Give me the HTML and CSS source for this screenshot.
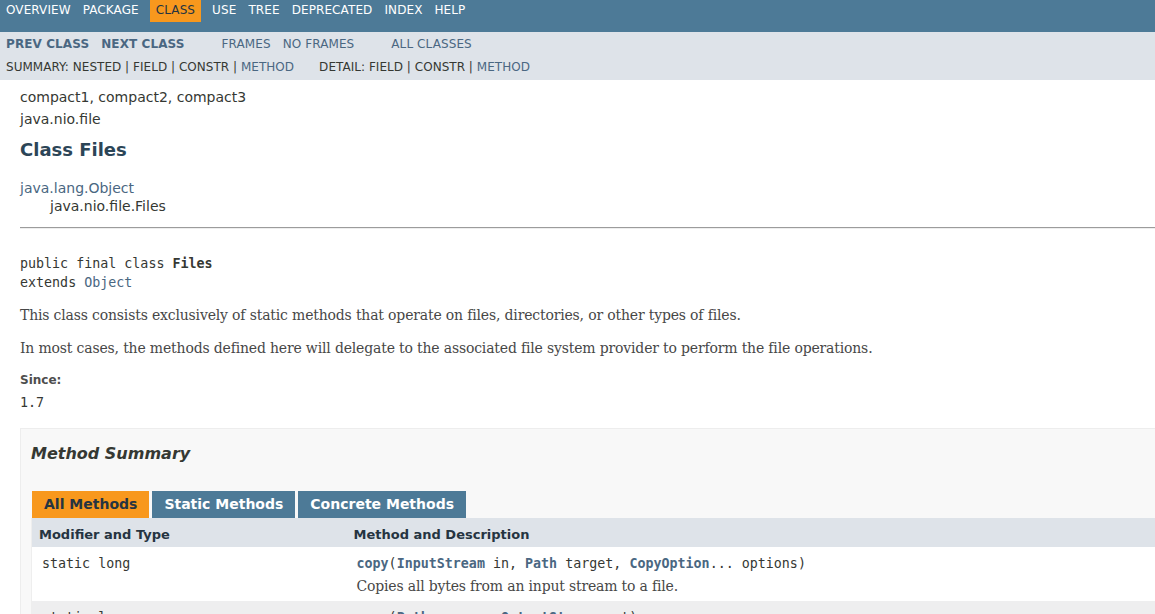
FILE: index.html
```html
<!DOCTYPE html>
<html lang="en">
<head>
<meta charset="utf-8">
<title>Files (Java Platform SE 8)</title>
<link rel="stylesheet" href="styles.css">
</head>
<body>
<div class="page">
  <div class="topNav">
    <ul class="navList">
      <li><a class="navLink" href="#">Overview</a></li>
      <li><a class="navLink" href="#">Package</a></li>
      <li class="navBarCell1Rev">Class</li>
      <li><a class="navLink" href="#">Use</a></li>
      <li><a class="navLink" href="#">Tree</a></li>
      <li><a class="navLink" href="#">Deprecated</a></li>
      <li><a class="navLink" href="#">Index</a></li>
      <li><a class="navLink" href="#">Help</a></li>
    </ul>
  </div>
  <div class="subNav">
    <div class="subRow">
      <ul class="navList">
        <li><a class="subLink strong" href="#">Prev Class</a></li>
        <li><a class="subLink strong" href="#">Next Class</a></li>
      </ul>
      <ul class="navList">
        <li><a class="subLink" href="#">Frames</a></li>
        <li><a class="subLink" href="#">No Frames</a></li>
      </ul>
      <ul class="navList">
        <li><a class="subLink" href="#">All Classes</a></li>
      </ul>
    </div>
    <div class="subRow subRow2">
      <ul class="subNavList">
        <li>Summary:&nbsp;</li>
        <li>Nested&nbsp;|&nbsp;</li>
        <li>Field&nbsp;|&nbsp;</li>
        <li>Constr&nbsp;|&nbsp;</li>
        <li><a class="subLink" href="#">Method</a></li>
      </ul>
      <ul class="subNavList">
        <li>Detail:&nbsp;</li>
        <li>Field&nbsp;|&nbsp;</li>
        <li>Constr&nbsp;|&nbsp;</li>
        <li><a class="subLink" href="#">Method</a></li>
      </ul>
    </div>
  </div>

  <div class="header">
    <div class="subTitle">compact1, compact2, compact3</div>
    <div class="subTitle">java.nio.file</div>
    <h2 class="title">Class Files</h2>
  </div>

  <div class="contentContainer">
    <ul class="inheritance">
      <li><a class="link" href="#">java.lang.Object</a></li>
      <li class="inheritChild">java.nio.file.Files</li>
    </ul>

    <div class="description">
      <hr class="rule">
      <pre class="decl">public final class <span class="typeNameLabel">Files</span>
extends <a class="link" href="#">Object</a></pre>
      <div class="block">This class consists exclusively of static methods that operate on files, directories, or other types of files.
        <p class="para">In most cases, the methods defined here will delegate to the associated file system provider to perform the file operations.</p>
      </div>
      <dl class="since">
        <dt class="sinceLabel">Since:</dt>
        <dd class="sinceValue">1.7</dd>
      </dl>
    </div>

    <div class="summary">
      <h3 class="summaryTitle">Method Summary</h3>
      <table class="memberSummary">
        <caption class="tabCaption">
          <div class="tabs"><span class="tab activeTab">All Methods</span><span class="tab">Static Methods</span><span class="tab">Concrete Methods</span></div>
        </caption>
        <colgroup>
          <col class="firstCol">
          <col>
        </colgroup>
        <tr class="headRow">
          <th class="colFirst">Modifier and Type</th>
          <th class="colLast">Method and Description</th>
        </tr>
        <tr class="rowColor">
          <td class="colFirst"><code class="code">static long</code></td>
          <td class="colLast"><code class="code"><a class="memberLink" href="#">copy</a>(<a class="memberLink" href="#">InputStream</a>&nbsp;in, <a class="memberLink" href="#">Path</a>&nbsp;target, <a class="memberLink" href="#">CopyOption</a>...&nbsp;options)</code>
            <div class="cellBlock">Copies all bytes from an input stream to a file.</div>
          </td>
        </tr>
        <tr class="altColor">
          <td class="colFirst"><code class="code">static long</code></td>
          <td class="colLast"><code class="code"><a class="memberLink" href="#">copy</a>(<a class="memberLink" href="#">Path</a>&nbsp;source, <a class="memberLink" href="#">OutputStream</a>&nbsp;out)</code>
            <div class="cellBlock">Copies all bytes from a file to an output stream.</div>
          </td>
        </tr>
      </table>
    </div>
  </div>
</div>
</body>
</html>
```

FILE: styles.css
```css
html {
  overflow: hidden;
}

body {
  margin: 0;
  background: #ffffff;
  color: #353833;
  font-family: "DejaVu Sans", Arial, Helvetica, sans-serif;
  font-size: 14px;
}

.page {
  min-width: 1400px;
}

a {
  text-decoration: none;
}

.link {
  color: #4a6782;
}

/* ---------- top navigation ---------- */
.topNav {
  background: #4d7a97;
  height: 32px;
  font-size: 12px;
  color: #ffffff;
  letter-spacing: 0.1px;
}

.navList,
.subNavList {
  list-style: none;
  margin: 0 25px 0 0;
  padding: 0;
  display: flex;
}

.topNav .navList li {
  padding: 3px 6px 5px;
  line-height: 14px;
  text-transform: uppercase;
}

.navLink {
  color: #ffffff;
}

.topNav .navList .navBarCell1Rev {
  background: #f8981d;
  color: #253441;
  margin: 0 5px;
}

/* ---------- sub navigation ---------- */
.subNav {
  background: #dee3e9;
  font-size: 12px;
  padding: 5px 0 6px;
  letter-spacing: 0.1px;
}

.subRow {
  display: flex;
  line-height: 14px;
  text-transform: uppercase;
}

.subRow .navList li {
  padding: 0 6px;
}

.subRow2 {
  margin-top: 9px;
  padding-left: 6px;
  letter-spacing: 0.03px;
}

.subLink {
  color: #4a6782;
}

.strong {
  font-weight: bold;
}

/* ---------- header ---------- */
.header {
  margin: 0 20px;
  padding-top: 4px;
}

.subTitle {
  margin-top: 5px;
  line-height: 17px;
}

.title {
  color: #2c4557;
  font-size: 18px;
  line-height: 22px;
  margin: 11px 0 9px;
}

/* ---------- content ---------- */
.contentContainer {
  padding: 10px 20px;
}

.inheritance {
  list-style: none;
  margin: 0;
  padding: 0;
}

.inheritChild {
  padding: 2px 0 0 30px;
}

.description {
  margin-top: 13px;
  line-height: 1.4;
}

.rule {
  margin: 0;
  height: 0;
  border: 0;
  border-top: 1px solid #9c9c9c;
  border-bottom: 1px solid #eeeeee;
}

.decl {
  margin: 26px 0 14px;
  font-family: "DejaVu Sans Mono", monospace;
  font-size: 13.33px;
  line-height: 1.4;
}

.typeNameLabel {
  font-weight: bold;
}

.block {
  font-family: "DejaVu Serif", Georgia, "Times New Roman", serif;
  font-size: 14px;
  letter-spacing: -0.17px;
  color: #474747;
  margin: 0 10px 0 0;
}

.para {
  margin: 13.5px 0 0;
}

.since {
  margin: 13px 0 0;
}

.sinceLabel {
  font-size: 12px;
  font-weight: bold;
  color: #4e4e4e;
}

.sinceValue {
  margin: 5px 0 0;
  font-family: "DejaVu Sans Mono", monospace;
  font-size: 13.33px;
}

/* ---------- method summary ---------- */
.summary {
  margin-top: 16px;
  border: 1px solid #ededed;
  border-right: 0;
  background: #f8f8f8;
  padding: 0 20px 5px 10px;
  line-height: 1.4;
}

.summaryTitle {
  font-size: 16px;
  font-style: italic;
  font-weight: bold;
  color: #353833;
  margin: 14px 0 15px;
}

.memberSummary {
  width: 100%;
  border-collapse: separate;
  border-spacing: 0;
  border-left: 1px solid #eeeeee;
  border-right: 1px solid #eeeeee;
  border-bottom: 1px solid #eeeeee;
  table-layout: fixed;
}

.tabCaption {
  text-align: left;
  padding: 10px 0 0 1px;
  caption-side: top;
}

.tabs {
  display: flex;
}

.tab {
  display: block;
  box-sizing: border-box;
  height: 27px;
  padding: 5px 12px 0;
  line-height: 16px;
  margin-right: 3px;
  background: #4d7a97;
  color: #ffffff;
  font-weight: bold;
  font-size: 14px;
  white-space: nowrap;
}

.activeTab {
  background: #f8981d;
  color: #253441;
}

.firstCol {
  width: 314.5px;
}

.headRow th {
  background: #dee3e9;
  color: #253441;
  text-align: left;
  font-size: 13px;
  font-weight: bold;
  padding: 8px 3px 3px 7px;
  white-space: nowrap;
}

td.colFirst,
td.colLast {
  vertical-align: top;
  font-size: 13px;
  padding: 8px 0 3px 10px;
  text-align: left;
}

td.colFirst {
  white-space: nowrap;
}

.rowColor {
  background: #ffffff;
}

.altColor {
  background: #eeeeef;
}

.code {
  font-family: "DejaVu Sans Mono", monospace;
  font-size: 13.33px;
  line-height: 1.4;
}

.memberLink {
  color: #4a6782;
  font-weight: bold;
}

.cellBlock {
  font-family: "DejaVu Serif", Georgia, "Times New Roman", serif;
  font-size: 14px;
  letter-spacing: -0.18px;
  line-height: 1.4;
  color: #474747;
  margin: 3px 10px 2px 0;
}
```
